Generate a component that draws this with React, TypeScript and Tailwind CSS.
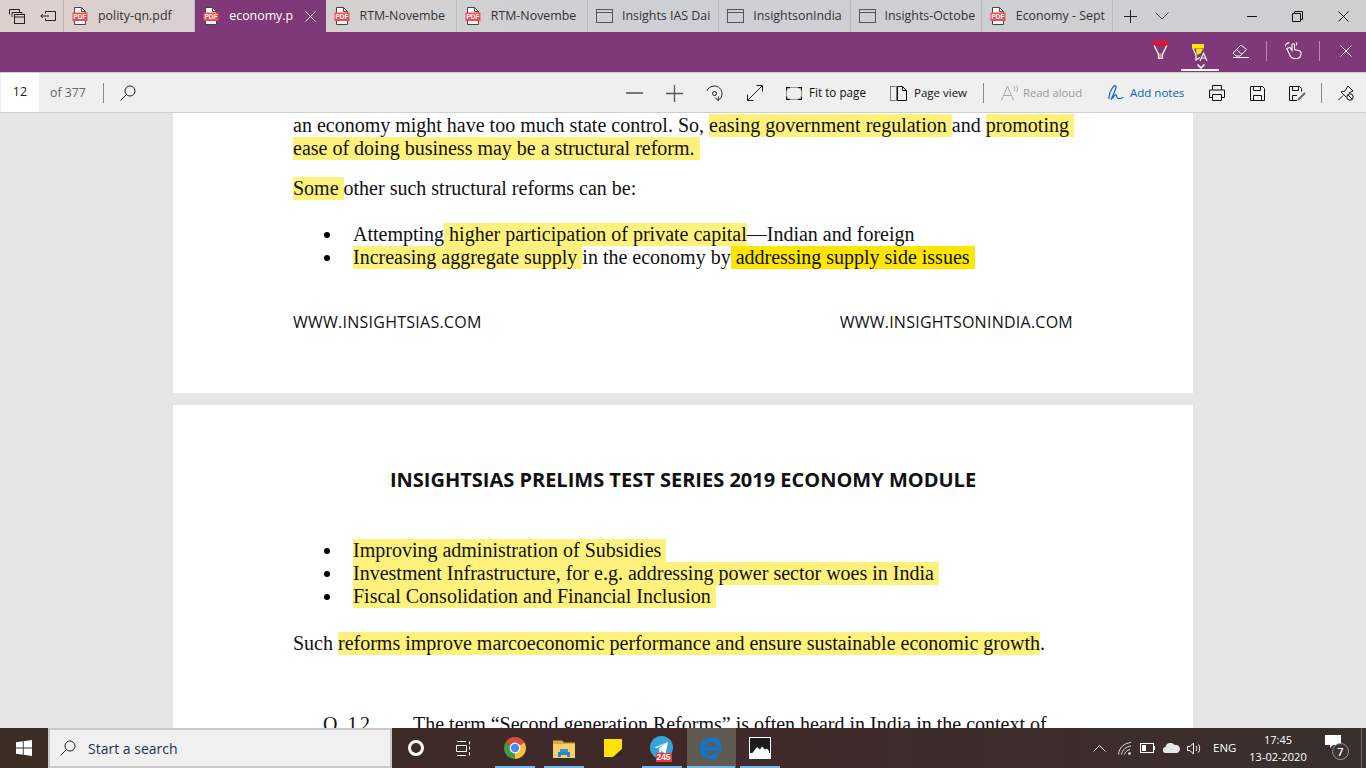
import React from "react";

const PdfIcon = () => (
  <svg width="16" height="18" viewBox="0 0 16 18" className="shrink-0">
    <path d="M2.500.5h7l4 4v13h-11z" fill="#fff" stroke="#444" />
    <path d="M9.500.5v4h4" fill="none" stroke="#444" />
    <rect x="0.500" y="5.500" width="15" height="8.500" fill="#f14c4c" />
    <text x="8" y="12.400" textAnchor="middle" fontSize="6.500" fontWeight="700" fill="#fff" fontFamily="Liberation Sans, sans-serif">PDF</text>
  </svg>
);

const WinIcon = () => (
  <svg width="17" height="14" viewBox="0 0 17 14" className="shrink-0" fill="none" stroke="#555">
    <rect x="0.500" y="0.500" width="16" height="13" />
    <path d="M.5 3.500h16" />
  </svg>
);

const tabs = [
  { t: "polity-qn.pdf", pdf: true },
  { t: "economy.p", pdf: true, active: true },
  { t: "RTM-Novembe", pdf: true },
  { t: "RTM-Novembe", pdf: true },
  { t: "Insights IAS Dai" },
  { t: "InsightsonIndia" },
  { t: "Insights-Octobe" },
  { t: "Economy - Sept", pdf: true },
];

function TabBar() {
  return (
    <div className="h-8 flex shrink-0 bg-gradient-to-r from-[#dcd0cc] via-[#ccd0d4] to-[#cfcfd0] text-[#333] text-[12.4px]">
      <div className="w-16 flex items-center border-r border-[#b5b5b5] shrink-0">
        <svg width="16" height="15" viewBox="0 0 16 15" className="ml-[9px]" fill="none" stroke="#222">
          <path d="M.5 5.500v-5h10v3M3 8V3.500h10V6" />
          <rect x="5.500" y="5.500" width="10" height="9" />
          <path d="M5.500 8h10" />
        </svg>
        <svg width="16" height="11" viewBox="0 0 16 11" className="ml-[15px]" fill="none" stroke="#222">
          <path d="M5.500 2.500V.5h10v9h-10v-2" />
          <path d="M9 5H.8M3 3 .8 5 3 7" />
        </svg>
      </div>
      <div className="w-[1049px] flex shrink-0">
        {tabs.map((tab, i) => (
          <div
            key={i}
            className={`flex-1 min-w-0 flex items-center pl-2 ${
              tab.active ? "bg-[#7f3978] text-white" : "border-r border-[#bdbdbd]"
            }`}
          >
            <div className="w-[26px] shrink-0 flex">{tab.pdf ? <PdfIcon /> : <WinIcon />}</div>
            <span className={`whitespace-nowrap ${tab.active ? "w-[66px]" : "w-[87px]"}`}>{tab.t}</span>
            {tab.active && (
              <svg width="11" height="11" viewBox="0 0 11 11" className="ml-[10px]" stroke="#fff" fill="none">
                <path d="M.5.5l10 10M10.500.5l-10 10" />
              </svg>
            )}
          </div>
        ))}
      </div>
      <div className="flex-1 flex items-center">
        <svg width="13" height="13" viewBox="0 0 13 13" className="ml-[11px]" stroke="#222" fill="none">
          <path d="M6.500 0v13M0 6.500h13" />
        </svg>
        <svg width="14" height="8" viewBox="0 0 14 8" className="ml-[18px]" stroke="#444" fill="none">
          <path d="M.5.5l6.500 6.500 6.500-6.500" />
        </svg>
        <svg width="10" height="1" viewBox="0 0 10 1" className="ml-[78px]" stroke="#111" fill="none">
          <path d="M0 .5h10" />
        </svg>
        <svg width="11" height="11" viewBox="0 0 11 11" className="ml-[35px]" stroke="#111" fill="none">
          <path d="M.5 2.500h8v8h-8zM2.500 2.500v-2h8v8h-2" />
        </svg>
        <svg width="11" height="11" viewBox="0 0 11 11" className="ml-[35px]" stroke="#111" fill="none">
          <path d="M.5.5l10 10M10.500.5l-10 10" />
        </svg>
      </div>
    </div>
  );
}

function InkBar() {
  return (
    <div className="h-10 shrink-0 bg-[#7f3978] flex items-center justify-end">
      <svg width="15" height="18" viewBox="0 0 15 18" className="mb-[4px]" fill="none">
        <path d="M1 4l4.500 9.500V17h4v-3.500L14 4" stroke="#fff" strokeWidth="1.300" />
        <path d="M6 12.500h3V17H6z" fill="#f08a8a" />
        <rect x="0" y="0" width="15" height="4.500" fill="#e81123" />
      </svg>
      <div className="ml-[13px] w-[38px] h-10 relative">
        <svg width="18" height="18" viewBox="0 0 18 18" className="absolute left-[11px] top-[12px]" fill="none">
          <path d="M1 4l3 7.500V16l4-2.500" stroke="#fff" strokeWidth="1.200" />
          <path d="M4 5h7l-2.500 4.500L4.500 11z" fill="#ffe600" />
          <rect x="0" y="0" width="12" height="4.500" fill="#ffe600" />
          <path d="M8 17l3.500-8 3.500 8M9.300 14h4.400" stroke="#fff" strokeWidth="1.100" />
        </svg>
        <svg width="8" height="5" viewBox="0 0 8 5" className="absolute top-[32px] left-[16px]" stroke="#fff" fill="none" strokeWidth="1.500">
          <path d="M.5.5L4 4 7.500.5" />
        </svg>
        <div className="absolute bottom-[1px] left-0 right-0 h-[2px] bg-white"></div>
      </div>
      <svg width="17" height="14" viewBox="0 0 17 14" className="ml-[13px] mb-[3px]" stroke="#fff" fill="none">
        <path d="M1 9l8-8 5.500 4.500-6.500 6.500H4zM4.500 5.500l5.500 5M1 13.500h16" />
      </svg>
      <div className="ml-[17px] w-[1px] h-5 bg-[#b58db1] mb-[3px]"></div>
      <svg width="17" height="17" viewBox="0 0 17 17" className="ml-[18px] mb-[3px]" stroke="#fff" fill="none" strokeWidth="1.100">
        <path d="M3 9L1.500 6.500 5 5.500l2 3V3c0-1.700 2.500-1.700 2.500 0v4.500l4 1c2 .5 3 1.500 2.500 3.500l-.8 2.500c-.5 1.500-1.500 2-3 2H9c-1.500 0-2.500-.5-3.500-2z" />
        <path d="M.5 4.500C.5 2 2.500.5 4.500 1M11 3.500C12 2 12 1 11 .5" />
      </svg>
      <div className="ml-[17px] w-[1px] h-5 bg-[#b58db1] mb-[3px]"></div>
      <svg width="12" height="12" viewBox="0 0 12 12" className="ml-[20px] mr-[14px] mb-[3px]" stroke="#fff" fill="none">
        <path d="M.5.5l11 11M11.500.5l-11 11" />
      </svg>
    </div>
  );
}

function ToolBar() {
  const sep = "w-[1px] h-5 bg-[#8a8a8a] shrink-0";
  return (
    <div className="h-[41px] shrink-0 bg-[#efefef] border-t border-b border-[#cfcfcf] pt-[1px] flex items-center text-[11.7px] text-[#111]">
      <div className="ml-[1px] -mt-[1px] w-[38px] h-[39px] bg-white flex items-center justify-center text-[#222] text-[12.5px]">12</div>
      <span className="ml-[11px] w-[36px] whitespace-nowrap text-[#666] text-[12.3px]">of 377</span>
      <div className={`ml-[17px] ${sep}`}></div>
      <svg width="16" height="16" viewBox="0 0 16 16" className="ml-[16px]" stroke="#222" fill="none">
        <circle cx="10" cy="6" r="5" />
        <path d="M6.500 9.500L.5 15.500" />
      </svg>
      <svg width="17" height="2" viewBox="0 0 17 2" className="ml-[490px]" stroke="#777" fill="none" strokeWidth="2">
        <path d="M0 1h17" />
      </svg>
      <svg width="17" height="17" viewBox="0 0 17 17" className="ml-[23px]" stroke="#555" fill="none" strokeWidth="1.300">
        <path d="M8.500 0v17M0 8.500h17" />
      </svg>
      <svg width="17" height="17" viewBox="0 0 17 17" className="ml-[23px]" stroke="#222" fill="none">
        <path d="M.8 6C2 3 5 1 8.500 1c4 0 7.500 3.500 7.500 7.500 0 3-1.500 5.500-4 7" />
        <circle cx="8.500" cy="8.500" r="2" />
        <path d="M9 12.500l3 3 .5-4" />
      </svg>
      <svg width="16" height="16" viewBox="0 0 16 16" className="ml-[24px]" stroke="#222" fill="none">
        <path d="M.5 15.500l15-15M9.500.5h6v6M.5 9.500v6h6" />
      </svg>
      <svg width="16" height="13" viewBox="0 0 16 13" className="ml-[23px]" stroke="#111" fill="none">
        <path d="M4 .5H.5v3M12 .5h3.500v3M4 12.500H.5v-3M12 12.500h3.500v-3" strokeWidth="1.300" />
        <path d="M4 .5h8M4 12.500h8M.5 3.500v6M15.500 3.500v6" strokeOpacity="0.4" />
      </svg>
      <span className="ml-[7px] w-[60px] whitespace-nowrap">Fit to page</span>
      <svg width="17" height="15" viewBox="0 0 17 15" className="ml-[21px]" stroke="#111" fill="none">
        <path d="M.5.500h6v14h-6z" strokeDasharray="1 1" />
        <path d="M7.500.500h5l4 4v10h-9zM12.500.500v4h4" />
      </svg>
      <span className="ml-[7px] w-[54px] whitespace-nowrap text-[11.5px]">Page view</span>
      <div className={`ml-[15px] ${sep}`}></div>
      <svg width="18" height="16" viewBox="0 0 18 16" className="ml-[17px]" stroke="#a8a8a8" fill="none">
        <path d="M.5 15.500L6.500 1l6 14.500M2.500 10.500h8" />
        <path d="M13 1c1 1.500 1 3.500 0 5M15.500 .5c1.500 2 1.500 4.500 0 6.500" />
      </svg>
      <span className="ml-[4px] w-[60px] whitespace-nowrap text-[11.3px] text-[#9a9a9a]">Read aloud</span>
      <svg width="16" height="16" viewBox="0 0 16 16" className="ml-[25px]" stroke="#0b66c2" fill="none" strokeWidth="1.200">
        <path d="M1 14C.5 10 3 4 6 1c1-1 2.500 0 2 1.500C7 6 5 11 3 14.500 5 13 7 9.500 8 9.500c.5 0 .5 3 2 4 1.500.5 3.500-.5 5.500-1" />
      </svg>
      <span className="ml-[6px] w-[56px] whitespace-nowrap text-[11.5px] text-[#0b5fb8]">Add notes</span>
      <svg width="16" height="16" viewBox="0 0 16 16" className="ml-[23px]" stroke="#111" fill="none">
        <path d="M3.500 5V.5h9V5M3.500 12.500h-3v-7.500h15v7.500h-3M3.500 9.500h9v6h-9z" />
      </svg>
      <svg width="15" height="15" viewBox="0 0 15 15" className="ml-[25px]" stroke="#111" fill="none">
        <path d="M.5.500h12l2 2v12H.5zM3.500.500v4h7v-4M3.500 14.500v-5h8v5" />
      </svg>
      <svg width="17" height="15" viewBox="0 0 17 15" className="ml-[24px]" stroke="#111" fill="none">
        <path d="M8 14.500H.5V.500h10l2 2v3M3.500.500v4h6v-4M3.500 14.500v-5H8" />
        <path d="M9 14l7-7" stroke="#666" strokeWidth="2" />
      </svg>
      <div className={`ml-[15px] ${sep}`}></div>
      <svg width="16" height="16" viewBox="0 0 16 16" className="ml-[16px]" stroke="#111" fill="none">
        <path d="M.5 15l4.500-4.500M3 7l4-1 3-5 5 5-4 2" />
        <path d="M3 7l5 5" />
        <circle cx="12" cy="12" r="3.200" />
        <path d="M10 10l4 4" />
      </svg>
    </div>
  );
}

const Mark = ({ children, strong }: { children: React.ReactNode; strong?: boolean }) => (
  <span className={`inline-block h-[23px] ${strong ? "bg-[#ffe600]" : "bg-[#fff27c]"}`}>{children}</span>
);

const Line = ({ children, className = "" }: { children: React.ReactNode; className?: string }) => (
  <div className={`h-[23px] leading-[23px] whitespace-pre ${className}`}>{children}</div>
);

const Bullet = ({ children }: { children: React.ReactNode }) => (
  <Line className="flex items-center">
    <span className="w-[60px] pl-[31px] shrink-0">
      <span className="block w-[6px] h-[6px] rounded-full bg-black"></span>
    </span>
    <span>{children}</span>
  </Line>
);

function Doc() {
  return (
    <div className="flex-1 min-h-0 overflow-hidden bg-[#e6e6e6] font-['Liberation_Serif',serif] text-[20px] text-[#111]">
      <div className="w-[1020px] ml-[173px] h-[280px] bg-white pl-[120px] pr-[120px] pt-[1px]">
        <Line>
          {"an economy might have too much state control. So, "}
          <Mark>easing government regulation </Mark>
          {"and "}
          <Mark>promoting </Mark>
        </Line>
        <Line><Mark>ease of doing business may be a structural reform. </Mark></Line>
        <Line className="mt-[17px]"><Mark>Some </Mark>other such structural reforms can be:</Line>
        <div className="mt-[23px]">
          <Bullet>Attempting<Mark> higher participation of private capital</Mark>—Indian and foreign</Bullet>
          <Bullet><Mark>Increasing aggregate supply </Mark>in the economy by<Mark strong> addressing supply side issues </Mark></Bullet>
        </div>
        <div className="mt-[42px] flex justify-between font-['Open_Sans',sans-serif] text-[16px] tracking-[0.25px] leading-[23px]">
          <span>WWW.INSIGHTSIAS.COM</span>
          <span>WWW.INSIGHTSONINDIA.COM</span>
        </div>
      </div>
      <div className="w-[1020px] ml-[173px] mt-3 h-[500px] bg-white pl-[120px] pr-[120px] pt-[62px]">
        <div className="text-center font-['Open_Sans',sans-serif] font-bold text-[20px] leading-[26px] text-[#111] whitespace-nowrap">
          INSIGHTSIAS PRELIMS TEST SERIES 2019 ECONOMY MODULE
        </div>
        <div className="mt-[46px]">
          <Bullet><Mark>Improving administration of Subsidies </Mark></Bullet>
          <Bullet><Mark>Investment Infrastructure, for e.g. addressing power sector woes in India </Mark></Bullet>
          <Bullet><Mark>Fiscal Consolidation and Financial Inclusion </Mark></Bullet>
        </div>
        <Line className="mt-[24px]">Such <Mark>reforms improve marcoeconomic performance and ensure sustainable economic growth</Mark>.</Line>
        <Line className="mt-[58px] flex">
          <span className="w-[120px] pl-[30px] shrink-0 tracking-[2.5px]">Q.12</span>
          <span>The term “Second generation Reforms” is often heard in India in the context of</span>
        </Line>
      </div>
    </div>
  );
}

const Underline = ({ w = "w-10" }: { w?: string }) => (
  <div className={`absolute bottom-0 left-1/2 -translate-x-1/2 h-[2px] bg-[#76b9ed] ${w}`}></div>
);

function TaskBar() {
  return (
    <div className="h-10 shrink-0 flex items-center bg-gradient-to-r from-[#3a2e24] via-[#41292a] to-[#38302d] text-white font-['Open_Sans',sans-serif]">
      <div className="w-12 shrink-0 flex justify-center">
        <svg width="16" height="16" viewBox="0 0 16 16" fill="#fff">
          <path d="M0 2.300L6.800 1.300V7.500H0zM7.700 1.200L16 0V7.500H7.700zM0 8.500h6.800v6.200L0 13.700zM7.700 8.500H16V16l-8.300-1.200z" />
        </svg>
      </div>
      <div className="w-[344px] h-10 shrink-0 bg-[#f0f0f0] border-2 border-[#c9c9c9] flex items-center text-[#1f2f4f] text-[14px]">
        <svg width="16" height="16" viewBox="0 0 16 16" className="ml-[10px]" stroke="#222" fill="none">
          <circle cx="10" cy="6" r="5" />
          <path d="M6.500 9.500L.5 15.500" />
        </svg>
        <span className="ml-[12px]">Start a search</span>
      </div>
      <div className="w-12 shrink-0 flex justify-center">
        <div className="w-[16px] h-[16px] rounded-full border-[3px] border-white"></div>
      </div>
      <div className="w-12 shrink-0 flex justify-center">
        <svg width="16" height="15" viewBox="0 0 16 15" stroke="#fff" fill="none">
          <path d="M1 .5h9M.5 4.500h10v6H.5zM1 14.500h9M13.500.5v3M13.500 5.500v3M13.500 11v3.500" />
        </svg>
      </div>
      <div className="ml-[2.5px] flex h-10 shrink-0">
        <div className="w-[49px] h-10 relative flex items-center justify-center">
          <svg width="22" height="22" viewBox="0 0 22 22">
            <path d="M11 11L1.500 5.500A11 11 0 0 1 20.500 5.500Z" fill="#dd4b3e" />
            <path d="M11 11L20.500 5.500A11 11 0 0 1 11 22Z" fill="#f5c33b" />
            <path d="M11 11L11 22A11 11 0 0 1 1.500 5.500Z" fill="#3f9c4a" />
            <circle cx="11" cy="11" r="5.400" fill="#fff" />
            <circle cx="11" cy="11" r="4.200" fill="#4a8af4" />
          </svg>
          <Underline />
        </div>
        <div className="w-[49px] h-10 relative flex items-center justify-center">
          <svg width="22" height="19" viewBox="0 0 22 19">
            <path d="M0 1.500h9l2 2h11v15H0z" fill="#e2a93a" />
            <path d="M0 5h22v14H0z" fill="#f6d06a" />
            <path d="M7 13h8v-3h-8z" fill="#3a8fd6" />
            <path d="M5 13h12v5h-3v-2H8v2H5z" fill="#2f86cc" />
          </svg>
          <Underline />
        </div>
        <div className="w-[49px] h-10 flex items-center justify-center">
          <svg width="18" height="18" viewBox="0 0 18 18">
            <rect width="18" height="18" fill="#ffe200" />
            <path d="M18 10v8H9z" fill="#2a2a2a" />
          </svg>
        </div>
        <div className="w-[49px] h-10 relative flex items-center justify-center">
          <svg width="23" height="23" viewBox="0 0 23 23" className="-ml-[2px] -mt-[2px]">
            <circle cx="11.500" cy="11.500" r="11.500" fill="#35a4dc" />
            <path d="M4.500 11.500L18 6l-2.500 12-4-3-2 2-.5-4.500 6-5-7.500 4.500z" fill="#fff" />
          </svg>
          <span className="absolute left-[18px] top-[25px] w-[16px] h-[9px] bg-[#e53935] text-white text-[8.5px] leading-[9px] text-center font-semibold font-['Liberation_Sans',sans-serif]">245</span>
          <Underline />
        </div>
        <div className="w-[49px] h-10 relative flex items-center justify-center bg-[#5f5a52]">
          <svg width="22" height="22" viewBox="0 0 22 22" fill="none">
            <path d="M2.500 11.500H19.500C19.500 6 16 2.500 11 2.500S2 7 2 12s4 8 9 8c3 0 5.500-1 7.500-2.500" stroke="#0a78d7" strokeWidth="4" />
          </svg>
          <Underline w="w-12" />
        </div>
        <div className="w-[49px] h-10 relative flex items-center justify-center">
          <svg width="22" height="22" viewBox="0 0 22 22">
            <rect width="22" height="22" fill="#fff" />
            <rect x="1" y="1" width="20" height="15" fill="#1c1c1c" />
            <path d="M1 19l7-9 3 2.500 2-3 3 3 2-1 2 2.500v5H1z" fill="#fff" />
          </svg>
          <Underline />
        </div>
      </div>
      <div className="flex-1 flex items-center justify-end h-10">
        <svg width="13" height="7" viewBox="0 0 13 7" stroke="#fff" fill="none">
          <path d="M.5 6.500L6.500.5l6 6" />
        </svg>
        <svg width="14" height="13" viewBox="0 0 14 13" className="ml-[12px]" stroke="#ddd" fill="none">
          <path d="M.5 12.500C1 6 6 1 13 .5M3.500 12.500C4 8 8 4.500 13 4M6.500 12.500C7 10 9.500 8 12 7.500" />
          <circle cx="11.500" cy="11.500" r="1.300" fill="#fff" stroke="none" />
        </svg>
        <svg width="15" height="10" viewBox="0 0 15 10" className="ml-[8px]" stroke="#fff" fill="none">
          <rect x="0.500" y="0.500" width="13" height="9" />
          <rect x="2" y="2" width="4" height="6" fill="#fff" stroke="none" />
          <path d="M14.500 3v4" />
        </svg>
        <svg width="17" height="10" viewBox="0 0 17 10" className="ml-[8px]" fill="#e6e6e6">
          <path d="M3 10a3 3 0 0 1-.5-6 5 5 0 0 1 9-2 4 4 0 0 1 2.500 8z" />
        </svg>
        <svg width="16" height="13" viewBox="0 0 16 13" className="ml-[7px]" stroke="#fff" fill="none">
          <path d="M.5 4.500h2.500l3.500-3.500v11l-3.500-3.500H.5zM9 4c1 1.500 1 3.500 0 5M11.500 2.500c1.500 2.500 1.500 5.500 0 8" />
        </svg>
        <span className="ml-[10px] text-[11.5px] w-[26px] whitespace-nowrap">ENG</span>
        <div className="ml-[10px] w-[58px] flex flex-col items-center text-[11px] leading-[17px] whitespace-nowrap">
          <span>17:45</span>
          <span>13-02-2020</span>
        </div>
        <div className="ml-[18px] w-[24px] h-[32px] relative">
          <svg width="16" height="14" viewBox="0 0 16 14" className="absolute top-[3px] left-0" fill="#fff">
            <path d="M0 0h16v10H8l-3 3v-3H0z" />
          </svg>
          <span className="absolute left-[7px] top-[11px] w-[17px] h-[17px] rounded-full bg-[#3a3330] border border-[#9a9a9a] text-[11px] leading-[15px] text-center font-semibold">7</span>
        </div>
        <div className="ml-[12px] w-[1px] h-10 bg-[#6a6a6a] mr-[4px]"></div>
      </div>
    </div>
  );
}

export default function App() {
  return (
    <div className="w-[1366px] h-[768px] overflow-hidden flex flex-col font-['Open_Sans',sans-serif]">
      <TabBar />
      <InkBar />
      <ToolBar />
      <Doc />
      <TaskBar />
    </div>
  );
}
